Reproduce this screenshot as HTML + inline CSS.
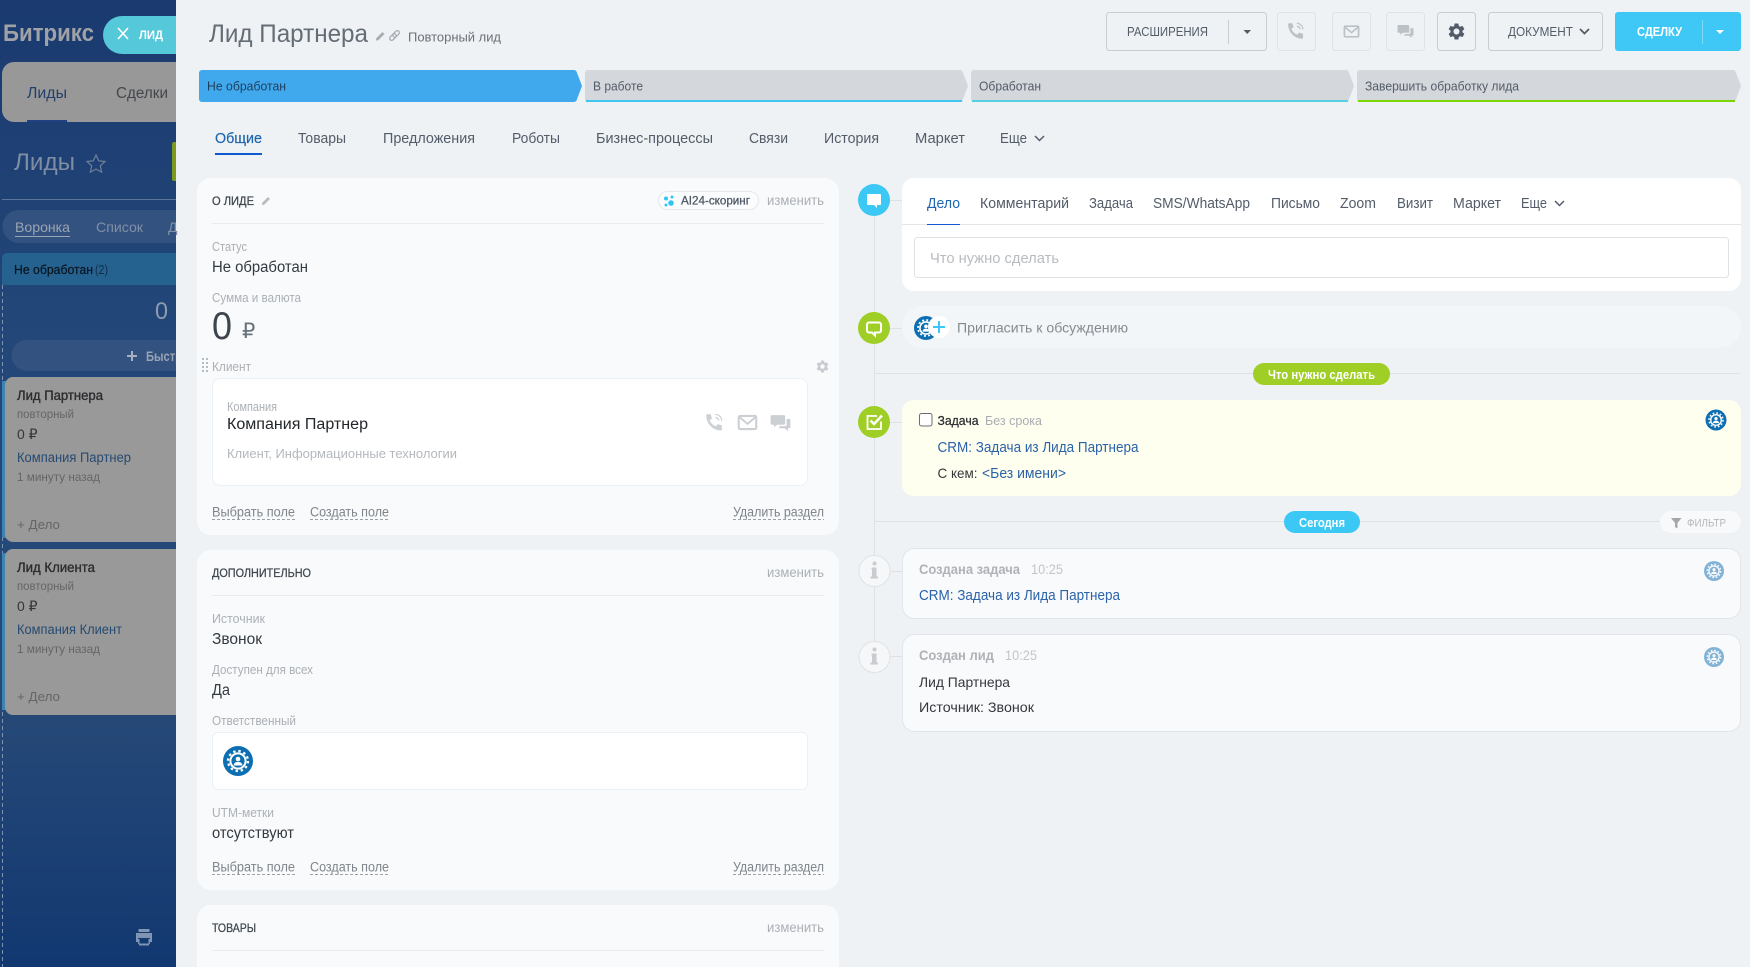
<!DOCTYPE html>
<html lang="ru"><head><meta charset="utf-8"><title>Лид Партнера</title>
<style>
html,body{margin:0;padding:0;width:1750px;height:967px;overflow:hidden;background:#eef2f4}
svg{display:block}
text{font-family:"Liberation Sans","DejaVu Sans",sans-serif;white-space:pre}
.b{font-weight:bold}
.lab{font-size:12.5px;fill:#abb0b5}
.val{font-size:15.5px;fill:#333a40}
.lnk{font-size:13.5px;fill:#7f858b}
.tab{font-size:14.5px;fill:#535c69}
.blue{fill:#2b62a8;font-size:14.5px}
.sec{font-size:11.5px;fill:#3f474f;stroke:#3f474f;stroke-width:.25px}
.cardt{font-size:13.5px;fill:#2b2c2e;stroke:#2b2c2e;stroke-width:.35px}
.dash{stroke:#9aa0a6;stroke-width:1;stroke-dasharray:3 2}
</style></head><body>
<svg width="1750" height="967" viewBox="0 0 1750 967" xmlns="http://www.w3.org/2000/svg">
<defs>
<linearGradient id="sb" x1="0" y1="0" x2="0" y2="1"><stop offset="0" stop-color="#1a3a70"/><stop offset=".35" stop-color="#234778"/><stop offset=".75" stop-color="#254877"/><stop offset="1" stop-color="#123871"/></linearGradient>
<symbol id="av" viewBox="0 0 30 30"><circle cx="15" cy="15" r="15" fill="#0d6fb2"/><circle cx="15" cy="15" r="7.6" fill="none" stroke="#fff" stroke-width="2"/><circle cx="15" cy="15" r="10" fill="none" stroke="#fff" stroke-width="2.2" stroke-dasharray="2.4 2.84"/><circle cx="15" cy="13" r="2.3" fill="#fff"/><path d="M10.6 19.5c.3-2.6 2-3.6 4.4-3.6s4.1 1 4.4 3.6z" fill="#fff"/></symbol>
<symbol id="ph" viewBox="0 0 24 24"><path d="M6.6 8.8c1.3 3.2 3.700 5.600 6.900 6.900l1.600-2.100c.3-.3.700-.4 1-.2 1 .5 2 .8 3.100.9.500 0 .8.400.8.900v3.900c0 .6-.4 1-1 1C9.900 20.100 3 12.300 3 3.500c0-.6.400-1 1-1h3.200c.5 0 .9.300 1 .8.100 1.200.4 2.200.9 3.200.2.300.1.700-.2 1z" fill="currentColor"/><path d="M13 2.500c3.800.2 6.600 3 7 7M13 6c1.800.2 3.300 1.500 3.600 3.400" fill="none" stroke="currentColor" stroke-width="1.300"/></symbol>
<symbol id="ml" viewBox="0 0 24 24"><rect x="2" y="4.500" width="20" height="15" rx="1.500" fill="none" stroke="currentColor" stroke-width="2.400"/><path d="M3 6l9 7.500L21 6" fill="none" stroke="currentColor" stroke-width="2.200"/></symbol>
<symbol id="ct" viewBox="0 0 24 24"><path d="M2 3.500h14c.8 0 1.300.5 1.300 1.300v8.400c0 .8-.5 1.300-1.300 1.300H8l-3.500 3v-3H2c-.8 0-1.300-.5-1.300-1.300V4.800C.7 4 1.200 3.500 2 3.500z" fill="currentColor"/><path d="M19 8h3c.8 0 1.300.5 1.300 1.300v8c0 .8-.5 1.300-1.300 1.300h-1.500v3.400l-3.500-3.400h-7l1.200-2.400H17c1.300 0 2-.7 2-2z" fill="currentColor"/></symbol>
<symbol id="gr" viewBox="0 0 24 24"><path fill="currentColor" d="M19.140 12.940c.04-.3.06-.61.06-.94 0-.32-.02-.64-.07-.94l2.030-1.580c.18-.14.23-.41.12-.61l-1.920-3.320c-.12-.22-.37-.29-.59-.22l-2.390.96c-.5-.38-1.030-.7-1.620-.94l-.36-2.540c-.04-.24-.24-.41-.48-.41h-3.840c-.24 0-.43.17-.47.41l-.36 2.540c-.59.24-1.130.57-1.620.94l-2.390-.96c-.22-.08-.47 0-.59.22L2.740 8.870c-.12.21-.08.47.12.61l2.030 1.580c-.05.3-.09.63-.09.94s.02.64.07.94l-2.030 1.580c-.18.14-.23.41-.12.61l1.920 3.320c.12.22.37.29.59.22l2.390-.96c.5.38 1.030.7 1.620.94l.36 2.540c.05.24.24.41.48.41h3.840c.24 0 .44-.17.47-.41l.36-2.540c.59-.24 1.130-.56 1.620-.94l2.390.96c.22.08.47 0 .59-.22l1.920-3.320c.12-.22.07-.47-.12-.61l-2.010-1.580zM12 15.600c-1.980 0-3.600-1.620-3.600-3.600s1.620-3.600 3.600-3.600 3.600 1.620 3.600 3.600-1.620 3.600-3.600 3.600z"/></symbol>
<symbol id="pc" viewBox="0 0 12 12"><path d="M1 11l.6-3L8.500 1.200l2.300 2.300L4 10.400z" fill="currentColor"/></symbol>
</defs>

<!-- background -->
<rect width="1750" height="967" fill="#eef2f4"/>
<!-- left dimmed kanban -->
<rect x="0" y="0" width="176" height="967" fill="url(#sb)"/>
<text x="3" y="41" font-size="24.500" class="b" fill="#a0a2a6" textLength="91" lengthAdjust="spacingAndGlyphs">Битрикс</text>
<path d="M176 16H122a19 19 0 0 0 0 38h54z" fill="#55c8da"/>
<path d="M118 28l10 11M128 28l-10 11" stroke="#fff" stroke-width="1.600" fill="none"/>
<text x="139" y="39" font-size="12" class="b" fill="#fff" textLength="24" lengthAdjust="spacingAndGlyphs">ЛИД</text>
<path d="M176 62H14a12 12 0 0 0-12 12v36a12 12 0 0 0 12 12h162z" fill="#989898"/>
<text x="27" y="98" font-size="15.500" fill="#24406a" textLength="40" lengthAdjust="spacingAndGlyphs">Лиды</text>
<text x="116" y="98" font-size="15.500" fill="#43474c" textLength="52" lengthAdjust="spacingAndGlyphs">Сделки</text>
<rect x="27" y="120" width="40" height="2" fill="#1f4180"/>
<text x="14" y="170" font-size="24.500" fill="#7f8ea3" textLength="61" lengthAdjust="spacingAndGlyphs">Лиды</text>
<path d="M96 155l2.700 5.800 6.300.7-4.700 4.300 1.300 6.300L96 169l-5.600 3.100 1.300-6.300-4.700-4.300 6.300-.7z" fill="none" stroke="#6f8099" stroke-width="1.200"/>
<path d="M176 142h-2a2 2 0 0 0-2 2v35a2 2 0 0 0 2 2h2z" fill="#7d9a1f"/>
<rect x="2" y="199" width="174" height="1" fill="#5b7599"/>
<path d="M176 210H19a16.500 16.500 0 0 0 0 33h157z" fill="#34527f"/>
<text x="15" y="232" font-size="14" fill="#9aa5b3" textLength="55" lengthAdjust="spacingAndGlyphs">Воронка</text>
<rect x="15" y="236" width="55" height="1" fill="#9aa5b3"/>
<text x="96" y="232" font-size="14" fill="#8090a6" textLength="47" lengthAdjust="spacingAndGlyphs">Список</text>
<text x="168" y="232" font-size="14" fill="#8090a6">Д</text>
<path d="M176 253H7a5 5 0 0 0-5 5v27h174z" fill="#25628f"/>
<text x="14" y="274" font-size="12.500" fill="#08141f" stroke="#08141f" stroke-width=".2" textLength="79" lengthAdjust="spacingAndGlyphs">Не обработан</text>
<text x="95" y="274" font-size="12.500" fill="#0f2d47" textLength="13" lengthAdjust="spacingAndGlyphs">(2)</text>
<path d="M2.500 285V967" stroke="#7f93ad" stroke-width="1" stroke-dasharray="4 3"/>
<text x="155" y="319" font-size="24.500" fill="#8c9bae" textLength="13" lengthAdjust="spacingAndGlyphs">0</text>
<path d="M176 340H27a15.500 15.500 0 0 0 0 31h149z" fill="#34527f"/>
<path d="M132 351v10M127 356h10" stroke="#a7b1bf" stroke-width="2" fill="none"/>
<text x="146" y="361" font-size="14" class="b" fill="#98a4b4" textLength="36" lengthAdjust="spacingAndGlyphs">Быстр</text>
<rect x="176" y="340" width="10" height="31" fill="#eef2f4"/>
<!-- kanban cards -->
<rect x="2" y="381" width="5" height="157" fill="#3d84b0"/>
<path d="M176 377H13a8 8 0 0 0-8 8v149a8 8 0 0 0 8 8h163z" fill="#999"/>
<text x="17" y="400" class="cardt" textLength="86" lengthAdjust="spacingAndGlyphs">Лид Партнера</text>
<text x="17" y="418" font-size="12" fill="#646567" textLength="57" lengthAdjust="spacingAndGlyphs">повторный</text>
<text x="17" y="439" font-size="14" fill="#353638">0 ₽</text>
<text x="17" y="462" font-size="13.500" fill="#264a72" textLength="114" lengthAdjust="spacingAndGlyphs">Компания Партнер</text>
<text x="17" y="481" font-size="12" fill="#646567" textLength="83" lengthAdjust="spacingAndGlyphs">1 минуту назад</text>
<text x="17" y="529" font-size="13" fill="#646567" textLength="43" lengthAdjust="spacingAndGlyphs">+ Дело</text>
<rect x="2" y="553" width="5" height="157" fill="#3d84b0"/>
<path d="M176 549H13a8 8 0 0 0-8 8v150a8 8 0 0 0 8 8h163z" fill="#999"/>
<text x="17" y="572" class="cardt" textLength="78" lengthAdjust="spacingAndGlyphs">Лид Клиента</text>
<text x="17" y="590" font-size="12" fill="#646567" textLength="57" lengthAdjust="spacingAndGlyphs">повторный</text>
<text x="17" y="611" font-size="14" fill="#353638">0 ₽</text>
<text x="17" y="634" font-size="13.500" fill="#264a72" textLength="105" lengthAdjust="spacingAndGlyphs">Компания Клиент</text>
<text x="17" y="653" font-size="12" fill="#646567" textLength="83" lengthAdjust="spacingAndGlyphs">1 минуту назад</text>
<text x="17" y="701" font-size="13" fill="#646567" textLength="43" lengthAdjust="spacingAndGlyphs">+ Дело</text>
<!-- printer -->
<g fill="#7f95b3"><rect x="138.500" y="929" width="11" height="3"/><path d="M136 933h16v9h-2v-4h-12v4h-2z"/><rect x="139" y="943.500" width="10" height="2"/><rect x="138" y="939" width="1.500" height="5"/><rect x="148.500" y="939" width="1.500" height="5"/></g>

<!-- header -->
<text x="209" y="42" font-size="25" fill="#646c76" textLength="159" lengthAdjust="spacingAndGlyphs">Лид Партнера</text>
<use href="#pc" x="375" y="31" width="10.500" height="10.500" color="#a8adb3"/>
<g fill="none" stroke="#a8adb3" stroke-width="1.300" transform="rotate(-45 394.500 35.500)"><rect x="388.500" y="33.500" width="7.500" height="4" rx="2"/><rect x="393" y="33.500" width="7.500" height="4" rx="2"/></g>
<text x="408" y="41.500" font-size="13" fill="#6b7178" textLength="93" lengthAdjust="spacingAndGlyphs">Повторный лид</text>

<rect x="1106.500" y="12.500" width="160" height="38" rx="3" fill="#eef2f4" stroke="#c6cdd3"/>
<text x="1127" y="36" font-size="12.500" fill="#535c69" textLength="81" lengthAdjust="spacingAndGlyphs">РАСШИРЕНИЯ</text>
<rect x="1228" y="20" width="1" height="24" fill="#c6cdd3"/>
<path d="M1243.500 30h7.500l-3.750 4z" fill="#535c69"/>
<rect x="1277.500" y="12.500" width="38" height="38" rx="3" fill="none" stroke="#dfe3e6"/>
<use href="#ph" x="1285" y="21" width="22" height="21" color="#bcc1c6"/>
<rect x="1332.500" y="12.500" width="38" height="38" rx="3" fill="none" stroke="#dfe3e6"/>
<use href="#ml" x="1343" y="23" width="17" height="17" color="#bcc1c6"/>
<rect x="1386.500" y="12.500" width="38" height="38" rx="3" fill="none" stroke="#dfe3e6"/>
<use href="#ct" x="1397" y="22" width="17" height="18" color="#bcc1c6"/>
<rect x="1437.500" y="12.500" width="38" height="38" rx="3" fill="none" stroke="#c6cdd3"/>
<use href="#gr" x="1446.500" y="21.500" width="20" height="20" color="#535c69"/>
<rect x="1488.500" y="12.500" width="114" height="38" rx="3" fill="none" stroke="#c6cdd3"/>
<text x="1508" y="36" font-size="12.500" fill="#535c69" textLength="65" lengthAdjust="spacingAndGlyphs">ДОКУМЕНТ</text>
<path d="M1580 29l4.500 4.500 4.500-4.500" fill="none" stroke="#535c69" stroke-width="1.800"/>
<rect x="1615" y="12" width="126" height="39" rx="3" fill="#3fc8f6"/>
<text x="1637" y="36" font-size="12.500" class="b" fill="#fff" textLength="45" lengthAdjust="spacingAndGlyphs">СДЕЛКУ</text>
<rect x="1702" y="20" width="1" height="24" fill="#7fdbf8"/>
<path d="M1716 30h8l-4 4z" fill="#fff"/>

<!-- progress -->
<path d="M202 70H574a3 3 0 0 1 2.500 1.500L582 86l-5.500 14.500a3 3 0 0 1-2.500 1.500H202a3 3 0 0 1-3-3V73a3 3 0 0 1 3-3z" fill="#40a9ee"/>
<text x="207" y="90.500" font-size="12.500" fill="#1f3e5c" textLength="79" lengthAdjust="spacingAndGlyphs">Не обработан</text>
<g fill="#d4d7db">
<path d="M588 70H960a3 3 0 0 1 2.500 1.500L968 86l-5.500 14.500a3 3 0 0 1-2.500 1.500H588a3 3 0 0 1-3-3V73a3 3 0 0 1 3-3z"/>
<path d="M974 70H1346a3 3 0 0 1 2.500 1.500L1354 86l-5.500 14.500a3 3 0 0 1-2.500 1.500H974a3 3 0 0 1-3-3V73a3 3 0 0 1 3-3z"/>
<path d="M1360 70H1733a3 3 0 0 1 2.500 1.500L1741 86l-5.500 14.500a3 3 0 0 1-2.500 1.500H1360a3 3 0 0 1-3-3V73a3 3 0 0 1 3-3z"/>
</g>
<rect x="586" y="100" width="376" height="2" fill="#3fc6ef"/>
<rect x="972" y="100" width="376" height="2" fill="#55d0e0"/>
<rect x="1358" y="100" width="377" height="2" fill="#7bd500"/>
<text x="593" y="90.500" font-size="12.500" fill="#535c69" textLength="50" lengthAdjust="spacingAndGlyphs">В работе</text>
<text x="979" y="90.500" font-size="12.500" fill="#535c69" textLength="62" lengthAdjust="spacingAndGlyphs">Обработан</text>
<text x="1365" y="90.500" font-size="12.500" fill="#535c69" textLength="154" lengthAdjust="spacingAndGlyphs">Завершить обработку лида</text>

<!-- tabs -->
<text x="215" y="143" class="tab" style="fill:#2067b0" stroke="#2067b0" stroke-width=".2" textLength="47" lengthAdjust="spacingAndGlyphs">Общие</text>
<rect x="215" y="153" width="47" height="2" fill="#1058d0"/>
<text x="298" y="143" class="tab" textLength="48" lengthAdjust="spacingAndGlyphs">Товары</text>
<text x="383" y="143" class="tab" textLength="92" lengthAdjust="spacingAndGlyphs">Предложения</text>
<text x="512" y="143" class="tab" textLength="48" lengthAdjust="spacingAndGlyphs">Роботы</text>
<text x="596" y="143" class="tab" textLength="117" lengthAdjust="spacingAndGlyphs">Бизнес-процессы</text>
<text x="749" y="143" class="tab" textLength="39" lengthAdjust="spacingAndGlyphs">Связи</text>
<text x="824" y="143" class="tab" textLength="55" lengthAdjust="spacingAndGlyphs">История</text>
<text x="915" y="143" class="tab" textLength="50" lengthAdjust="spacingAndGlyphs">Маркет</text>
<text x="1000" y="143" class="tab" textLength="27" lengthAdjust="spacingAndGlyphs">Еще</text>
<path d="M1035 136l4.500 4.500 4.500-4.500" fill="none" stroke="#535c69" stroke-width="1.500"/>

<!-- card О ЛИДЕ -->
<rect x="197" y="178" width="642" height="357" rx="14" fill="#f8fafc"/>
<text x="212" y="205" class="sec" textLength="42" lengthAdjust="spacingAndGlyphs">О ЛИДЕ</text>
<use href="#pc" x="261" y="196" width="10" height="10" color="#b8bcc1"/>
<rect x="658.500" y="191.500" width="100" height="18" rx="9" fill="#fbfcfd" stroke="#e5e8eb"/>
<g fill="#2fc6f4"><circle cx="666" cy="198.500" r="2"/><circle cx="671" cy="203" r="2.800"/><circle cx="666" cy="205" r="1.500"/><circle cx="672" cy="197" r="1.500"/></g>
<text x="681" y="204.500" font-size="11.500" fill="#4f5a66" stroke="#4f5a66" stroke-width=".3" textLength="69" lengthAdjust="spacingAndGlyphs">AI24-скоринг</text>
<text x="767" y="205" class="lnk" style="fill:#abb0b5" textLength="57" lengthAdjust="spacingAndGlyphs">изменить</text>
<rect x="212" y="223" width="612" height="1" fill="#e9ecef"/>
<text x="212" y="251" class="lab" textLength="35" lengthAdjust="spacingAndGlyphs">Статус</text>
<text x="212" y="272" class="val" textLength="96" lengthAdjust="spacingAndGlyphs">Не обработан</text>
<text x="212" y="302" class="lab" textLength="89" lengthAdjust="spacingAndGlyphs">Сумма и валюта</text>
<text x="212" y="339" font-size="39" fill="#3d444b" textLength="20" lengthAdjust="spacingAndGlyphs">0</text>
<text x="242" y="338" font-size="21" fill="#6a727a">₽</text>
<g fill="#b7bcc1"><rect x="202" y="358" width="2" height="2"/><rect x="206" y="358" width="2" height="2"/><rect x="202" y="362" width="2" height="2"/><rect x="206" y="362" width="2" height="2"/><rect x="202" y="366" width="2" height="2"/><rect x="206" y="366" width="2" height="2"/><rect x="202" y="370" width="2" height="2"/><rect x="206" y="370" width="2" height="2"/></g>
<text x="212" y="371" class="lab" textLength="39" lengthAdjust="spacingAndGlyphs">Клиент</text>
<use href="#gr" x="815" y="359" width="15" height="15" color="#c8ccd0"/>
<rect x="212.500" y="378.500" width="595" height="107" rx="8" fill="#fff" stroke="#edf0f2"/>
<text x="227" y="411" class="lab" textLength="50" lengthAdjust="spacingAndGlyphs">Компания</text>
<text x="227" y="429" font-size="15.500" fill="#22262a" textLength="141" lengthAdjust="spacingAndGlyphs">Компания Партнер</text>
<text x="227" y="458" font-size="13" fill="#b4b8bd" textLength="230" lengthAdjust="spacingAndGlyphs">Клиент, Информационные технологии</text>
<use href="#ph" x="703" y="412" width="23" height="22" color="#ccd0d4"/>
<use href="#ml" x="737" y="412" width="21" height="21" color="#ccd0d4"/>
<use href="#ct" x="770" y="412" width="21" height="21" color="#ccd0d4"/>
<text x="212" y="516.500" class="lnk" textLength="83" lengthAdjust="spacingAndGlyphs">Выбрать поле</text>
<text x="310" y="516.500" class="lnk" textLength="79" lengthAdjust="spacingAndGlyphs">Создать поле</text>
<text x="733" y="516.500" class="lnk" textLength="91" lengthAdjust="spacingAndGlyphs">Удалить раздел</text>
<path d="M212 519.500h83M310 519.500h79M733 519.500h91" class="dash"/>

<!-- card ДОПОЛНИТЕЛЬНО -->
<rect x="197" y="550" width="642" height="340" rx="14" fill="#f8fafc"/>
<text x="212" y="577" class="sec" textLength="99" lengthAdjust="spacingAndGlyphs">ДОПОЛНИТЕЛЬНО</text>
<text x="767" y="577" class="lnk" style="fill:#abb0b5" textLength="57" lengthAdjust="spacingAndGlyphs">изменить</text>
<rect x="212" y="595" width="612" height="1" fill="#e9ecef"/>
<text x="212" y="623" class="lab" textLength="53" lengthAdjust="spacingAndGlyphs">Источник</text>
<text x="212" y="644" class="val" textLength="50" lengthAdjust="spacingAndGlyphs">Звонок</text>
<text x="212" y="674" class="lab" textLength="101" lengthAdjust="spacingAndGlyphs">Доступен для всех</text>
<text x="212" y="695" class="val" textLength="18" lengthAdjust="spacingAndGlyphs">Да</text>
<text x="212" y="725" class="lab" textLength="84" lengthAdjust="spacingAndGlyphs">Ответственный</text>
<rect x="212.500" y="732.500" width="595" height="57" rx="6" fill="#fff" stroke="#edf0f2"/>
<use href="#av" x="223" y="746" width="30" height="30"/>
<text x="212" y="817" class="lab" textLength="62" lengthAdjust="spacingAndGlyphs">UTM-метки</text>
<text x="212" y="838" class="val" textLength="82" lengthAdjust="spacingAndGlyphs">отсутствуют</text>
<text x="212" y="871.500" class="lnk" textLength="83" lengthAdjust="spacingAndGlyphs">Выбрать поле</text>
<text x="310" y="871.500" class="lnk" textLength="79" lengthAdjust="spacingAndGlyphs">Создать поле</text>
<text x="733" y="871.500" class="lnk" textLength="91" lengthAdjust="spacingAndGlyphs">Удалить раздел</text>
<path d="M212 874.500h83M310 874.500h79M733 874.500h91" class="dash"/>

<!-- card ТОВАРЫ -->
<rect x="197" y="905" width="642" height="80" rx="14" fill="#f8fafc"/>
<text x="212" y="932" class="sec" textLength="44" lengthAdjust="spacingAndGlyphs">ТОВАРЫ</text>
<text x="767" y="932" class="lnk" style="fill:#abb0b5" textLength="57" lengthAdjust="spacingAndGlyphs">изменить</text>
<rect x="212" y="950" width="612" height="1" fill="#e9ecef"/>

<!-- timeline -->
<rect x="874" y="200" width="1" height="457" fill="#dde2e6"/>
<rect x="874" y="200" width="28" height="1" fill="#dde2e6"/>
<rect x="874" y="328" width="28" height="1" fill="#dde2e6"/>
<rect x="874" y="422" width="28" height="1" fill="#dde2e6"/>
<rect x="874" y="571" width="28" height="1" fill="#dde2e6"/>
<rect x="874" y="656" width="28" height="1" fill="#dde2e6"/>
<rect x="874" y="373" width="866" height="1" fill="#dde2e6"/>
<rect x="874" y="521" width="786" height="1" fill="#dde2e6"/>

<circle cx="874" cy="200" r="16" fill="#3bc8f5"/>
<path d="M868 194h12a1 1 0 0 1 1 1v9a1 1 0 0 1-1 1h-3v3l-3-3h-6a1 1 0 0 1-1-1v-9a1 1 0 0 1 1-1z" fill="#fff"/>
<circle cx="874" cy="328" r="16" fill="#9fcf26"/>
<path d="M869 322.500h10a2 2 0 0 1 2 2v6a2 2 0 0 1-2 2h-4v3l-3-3h-3a2 2 0 0 1-2-2v-6a2 2 0 0 1 2-2z" fill="none" stroke="#fff" stroke-width="2"/>
<circle cx="874" cy="422" r="16" fill="#9fcf26"/>
<path d="M881 421.500V429h-13.500v-13H877" fill="none" stroke="#fff" stroke-width="1.800"/>
<path d="M870.500 420.500l3.500 3.500 8-8.500" fill="none" stroke="#fff" stroke-width="2.400"/>

<!-- editor -->
<rect x="902" y="178" width="839" height="113" rx="12" fill="#fff"/>
<text x="927" y="208" class="tab" style="fill:#2067b0" textLength="33" lengthAdjust="spacingAndGlyphs">Дело</text>
<text x="980" y="208" class="tab" textLength="89" lengthAdjust="spacingAndGlyphs">Комментарий</text>
<text x="1089" y="208" class="tab" textLength="44" lengthAdjust="spacingAndGlyphs">Задача</text>
<text x="1153" y="208" class="tab" textLength="97" lengthAdjust="spacingAndGlyphs">SMS/WhatsApp</text>
<text x="1271" y="208" class="tab" textLength="49" lengthAdjust="spacingAndGlyphs">Письмо</text>
<text x="1340" y="208" class="tab" textLength="36" lengthAdjust="spacingAndGlyphs">Zoom</text>
<text x="1397" y="208" class="tab" textLength="36" lengthAdjust="spacingAndGlyphs">Визит</text>
<text x="1453" y="208" class="tab" textLength="48" lengthAdjust="spacingAndGlyphs">Маркет</text>
<text x="1521" y="208" class="tab" textLength="26" lengthAdjust="spacingAndGlyphs">Еще</text>
<path d="M1555 201l4.500 4.500 4.500-4.500" fill="none" stroke="#535c69" stroke-width="1.500"/>
<rect x="902" y="224" width="839" height="1" fill="#e3e6e9"/>
<rect x="927" y="224" width="33" height="1" fill="#1058d0"/>
<rect x="914.500" y="237.500" width="814" height="40" rx="3" fill="#fff" stroke="#dfe3e5"/>
<text x="930" y="263" font-size="15" fill="#b8bcc0" textLength="129" lengthAdjust="spacingAndGlyphs">Что нужно сделать</text>

<!-- invite -->
<rect x="902" y="306" width="839" height="42" rx="21" fill="#f3f6f8"/>
<use href="#av" x="914" y="316" width="24" height="24"/>
<circle cx="939" cy="327" r="11" fill="#fff"/>
<path d="M939 321v12M933 327h12" stroke="#3bc8f5" stroke-width="2"/>
<text x="957" y="332.500" font-size="14" fill="#858a90" textLength="171" lengthAdjust="spacingAndGlyphs">Пригласить к обсуждению</text>

<rect x="1253" y="363" width="137" height="22" rx="11" fill="#9fcf26"/>
<text x="1268" y="379" font-size="12.500" class="b" fill="#fff" textLength="107" lengthAdjust="spacingAndGlyphs">Что нужно сделать</text>

<!-- task -->
<rect x="902" y="400" width="839" height="96" rx="12" fill="#fffff0"/>
<rect x="919.500" y="413.500" width="12.500" height="12.500" rx="2" fill="#fff" stroke="#6a6f74"/>
<text x="937.500" y="425" font-size="13" fill="#2a2c2f" stroke="#2a2c2f" stroke-width=".25" textLength="41" lengthAdjust="spacingAndGlyphs">Задача</text>
<text x="985" y="425" font-size="13" fill="#a9adb1" textLength="57" lengthAdjust="spacingAndGlyphs">Без срока</text>
<text x="937.500" y="452" class="blue" textLength="201" lengthAdjust="spacingAndGlyphs">CRM: Задача из Лида Партнера</text>
<text x="937.500" y="478" font-size="14" fill="#34383c" textLength="40" lengthAdjust="spacingAndGlyphs">С кем:</text>
<text x="982" y="478" class="blue" textLength="84" lengthAdjust="spacingAndGlyphs">&lt;Без имени&gt;</text>
<use href="#av" x="1705.500" y="409.500" width="21" height="21"/>

<!-- today -->
<rect x="1284" y="511" width="76" height="22" rx="11" fill="#3bc8f5"/>
<text x="1299" y="527" font-size="12.500" class="b" fill="#fff" textLength="46" lengthAdjust="spacingAndGlyphs">Сегодня</text>
<rect x="1660" y="511" width="81" height="22" rx="11" fill="#f8f9fb"/>
<path d="M1671 518h10.500l-4 5v5.500l-2.500-1.500v-4z" fill="#a4a8ac"/>
<text x="1687" y="526.500" font-size="11" fill="#b5b8bc" textLength="39" lengthAdjust="spacingAndGlyphs">ФИЛЬТР</text>

<!-- history 1 -->
<rect x="902.500" y="548.500" width="838" height="70" rx="12" fill="#f9fafc" stroke="#e2e6ea"/>
<circle cx="874.500" cy="571" r="15.500" fill="#f5f7f8" stroke="#dfe3e6"/>
<g fill="#c8cbcf"><circle cx="874.500" cy="563.500" r="2"/><path d="M871.500 567.500h5v9h1.500v2h-7.500v-2h1.500v-7h-.5z"/></g>
<text x="919" y="574" font-size="13.500" class="b" fill="#aeb2b6" textLength="101" lengthAdjust="spacingAndGlyphs">Создана задача</text>
<text x="1031" y="574" font-size="14" fill="#c2c5c8" textLength="32" lengthAdjust="spacingAndGlyphs">10:25</text>
<text x="919" y="600" class="blue" textLength="201" lengthAdjust="spacingAndGlyphs">CRM: Задача из Лида Партнера</text>
<use href="#av" x="1704" y="561" width="20" height="20" opacity=".5"/>

<!-- history 2 -->
<rect x="902.500" y="634.500" width="838" height="97" rx="12" fill="#f9fafc" stroke="#e2e6ea"/>
<circle cx="874.500" cy="657" r="15.500" fill="#f5f7f8" stroke="#dfe3e6"/>
<g fill="#c8cbcf"><circle cx="874.500" cy="649.500" r="2"/><path d="M871.500 653.500h5v9h1.500v2h-7.500v-2h1.500v-7h-.5z"/></g>
<text x="919" y="660" font-size="13.500" class="b" fill="#aeb2b6" textLength="75" lengthAdjust="spacingAndGlyphs">Создан лид</text>
<text x="1005" y="660" font-size="14" fill="#c2c5c8" textLength="32" lengthAdjust="spacingAndGlyphs">10:25</text>
<text x="919" y="687" font-size="14" fill="#34383c" textLength="91" lengthAdjust="spacingAndGlyphs">Лид Партнера</text>
<text x="919" y="712" font-size="14" fill="#34383c" textLength="115" lengthAdjust="spacingAndGlyphs">Источник: Звонок</text>
<use href="#av" x="1704" y="647" width="20" height="20" opacity=".5"/>
</svg>
</body></html>
